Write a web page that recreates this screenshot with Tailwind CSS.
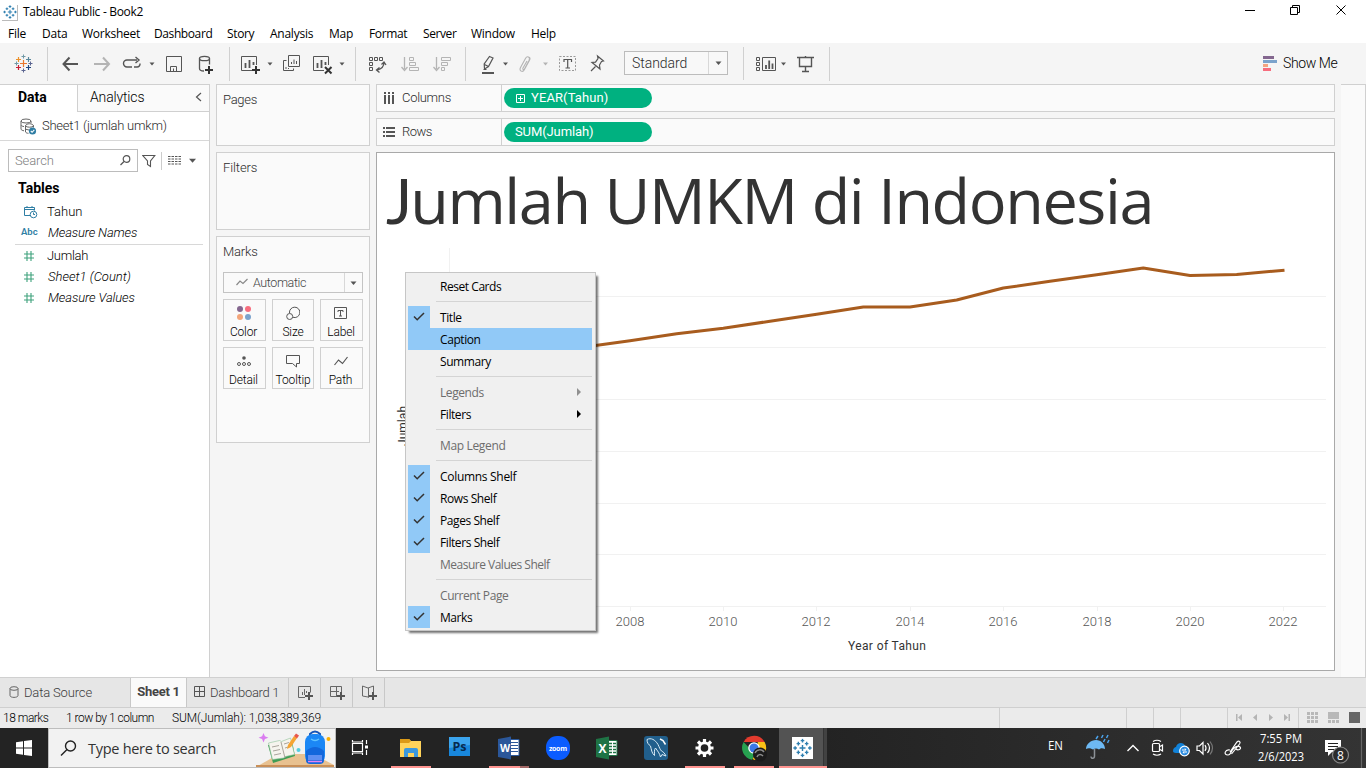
<!DOCTYPE html>
<html lang="en">
<head>
<meta charset="utf-8">
<title>Tableau Public - Book2</title>
<script src="https://cdn.jsdelivr.net/npm/@tailwindcss/browser@4"></script>
</head>
<body class="w-[1366px] h-[768px] overflow-hidden bg-white font-[Roboto,sans-serif] text-[13px] font-[350] text-[#2b2b2b]">
<svg width="0" height="0" class="hidden">
  <symbol id="caret" viewBox="0 0 6 4"><path d="M0 .5h6L3 4z" fill="#555"/></symbol>
  <symbol id="check" viewBox="0 0 12 9"><path d="M1 4.500 4.200 7.700 11 1" fill="none" stroke="#333" stroke-width="1.500"/></symbol>
  <symbol id="hash" viewBox="0 0 10 10"><path d="M3 0v10M7 0v10M0 3h10M0 7h10" fill="none" stroke="#3fa27c" stroke-width="1.100"/></symbol>
  <symbol id="blueLogo" viewBox="0 0 16 16"><path d="M8 5.500v5M5.500 8h5M4.500 2.800v3M3 4.300h3M11.500 2.800v3M10 4.300h3M4.500 10.200v3M3 11.700h3M11.500 10.200v3M10 11.700h3M8 .3v3M6.500 1.800h3M8 12.700v3M6.500 14.200h3M1.800 6.500v3M.3 8h3M14.200 6.500v3M12.700 8h3" fill="none" stroke="#2f7fb0" stroke-width="1.200"/></symbol>
</svg>

<div class="relative flex flex-col h-full">
  <!-- title bar -->
  <header class="flex h-6 shrink-0 items-center font-['Open_Sans',sans-serif] font-normal text-black">
    <div class="ml-[2px] mt-px flex size-4 items-center justify-center border-r border-b border-[#bbb]"><svg class="size-[14px]"><use href="#blueLogo"/></svg></div>
    <h1 class="ml-[5px] text-[12px] tracking-[-0.3px]">Tableau Public - Book2</h1>
    <svg class="ml-auto" width="120" height="24" viewBox="1240 0 120 24" fill="none" stroke="#000"><path d="M1245 10.500h10M1290.500 7.500h7v7h-7zM1292.500 7v-1.500h7v7h-2M1336.500 5.500l9 9M1345.500 5.500l-9 9"/></svg>
    <span class="w-[6px]"></span>
  </header>
  <!-- menu bar -->
  <nav class="flex h-[19px] shrink-0 items-center font-['Open_Sans',sans-serif] text-[12px] font-normal text-black tracking-[-0.25px]">
    <span class="ml-2 w-[34px]">File</span><span class="w-10">Data</span><span class="w-[72px]">Worksheet</span><span class="w-[73px] tracking-[-0.4px]">Dashboard</span><span class="w-[43px] tracking-[-0.35px]">Story</span><span class="w-[59px]">Analysis</span><span class="w-10">Map</span><span class="w-[54px] tracking-[-0.35px]">Format</span><span class="w-12 tracking-[-0.4px]">Server</span><span class="w-[60px]">Window</span><span>Help</span>
  </nav>

  <!-- toolbar -->
  <div class="flex h-[41px] shrink-0 bg-[#f5f5f5] text-[#555]">
    <div class="flex py-1">
      <svg class="border-r border-[#d0d0d0]" width="48" height="34" viewBox="0 47 47 34" fill="none" stroke-width="1.200">
        <path d="M23.500 60v7M20 63.500h7" stroke="#e8762c"/><path d="M18.500 57v5M16 59.500h5" stroke="#eb912c"/><path d="M28.500 57v5M26 59.500h5" stroke="#59879b"/><path d="M18.500 65v5M16 67.500h5" stroke="#c72035"/><path d="M28.500 65v5M26 67.500h5" stroke="#1f447e"/><path d="M23.500 54.500v4M21.500 56.500h4M14.500 63.500h4M16.500 61.500v4" stroke="#7199a6" stroke-width="1"/><path d="M23.500 68.500v4M21.500 70.500h4M28.500 63.500h4M30.500 61.500v4" stroke="#5b6591" stroke-width="1"/>
      </svg>
      <svg class="border-r border-[#d0d0d0]" width="182" height="34" viewBox="48 47 181 34" fill="none" stroke="#555" stroke-width="1.300">
        <path d="M69.500 57.500l-6 6.500 6 6.500M63 64h15" stroke-width="2"/>
        <path d="M103 57.500l6 6.500-6 6.500M109 64h-15" stroke="#b4b4b4" stroke-width="2"/>
        <path d="M132 67h-5a3.500 3.500 0 0 1 0-7h10M134 67h3a3 3 0 0 0 3-3.500M135.500 57l3.500 3-3.500 3" stroke-width="1.400"/>
        <path d="M149.500 62.500h5l-2.500 3z" fill="#555" stroke="none"/>
        <path d="M166.500 56.500h15v15h-15zM170.500 71v-4.500h6v4.500M173.500 71v-2.500" stroke-width="1"/>
        <path d="M199.500 58.500v10c0 1.500 2 2.500 4.500 2.500M209.500 58.500v6"/><ellipse cx="204.500" cy="58.500" rx="5" ry="2.200"/>
        <path d="M209 66v8M205 70h8" stroke="#333" stroke-width="2"/>
      </svg>
      <svg class="border-r border-[#d0d0d0]" width="126" height="34" viewBox="230 47 125 34" fill="none" stroke="#555" stroke-width="1">
        <path d="M252 70.500h-10.500v-14h15v8.500"/><path d="M245.500 68v-5M249.500 68v-8M253.500 65v-3" stroke-width="1.800"/>
        <path d="M256 66v8M252 70h8" stroke="#333" stroke-width="2"/>
        <path d="M267.500 62.500h5l-2.500 3z" fill="#555" stroke="none"/>
        <path d="M288.500 55.500h11v11h-11zM286.500 60.500h-3v10h10v-2M291.500 64v-2M294 64v-4.500M296.500 64v-3M286 69v-2M288.500 69v-1"/>
        <path d="M324 70.500h-10.500v-14h15v8.500"/><path d="M317.500 68v-5M321.500 68v-8M325.500 65v-3" stroke-width="1.800"/>
        <path d="M325 67l6.500 6.500M331.500 67l-6.500 6.500" stroke="#333" stroke-width="2"/>
        <path d="M339.500 62.500h5l-2.500 3z" fill="#555" stroke="none"/>
      </svg>
      <svg class="border-r border-[#d0d0d0]" width="110" height="34" viewBox="356 47 109 34" fill="none" stroke="#555" stroke-width="1">
        <path d="M369.500 57.500h3v3h-3zM374.500 57.500h3v3h-3zM379.500 57.500h3v3h-3zM369.500 62.500h3v3h-3zM369.500 67.500h3v3h-3z"/>
        <path d="M384 62.500c0 4-2.500 6.500-7 7.500M381.500 64.500l2.500-2.500 2 3M379.500 67.500l-3 2.500 3 2.500" stroke-width="1.300"/>
        <g stroke="#b4b4b4"><path d="M404.500 57v12M401.500 67l3 3.500 3-3.500" stroke-width="1.300"/><path d="M409.500 57.500h4v3h-4zM409.500 62.500h6v3h-6zM409.500 67.500h9v3h-9z"/>
        <path d="M436.500 57v12M433.500 67l3 3.500 3-3.500" stroke-width="1.300"/><path d="M441.500 57.500h9v3h-9zM441.500 62.500h6v3h-6zM441.500 67.500h3v3h-3z"/></g>
      </svg>
      <svg width="152" height="34" viewBox="466 47 152 34" fill="none" stroke="#555" stroke-width="1.200">
        <path d="M482 73h12" stroke-width="2"/><path d="M489.500 56.500l3.500 1.500-4.500 8.500-4 2.500-.300-5zM484.500 64.500l4 2M483.500 69.500h3"/>
        <path d="M503 62.500h5l-2.500 3z" fill="#555" stroke="none"/>
        <path d="M527 61l-4 7c-.8 1.500.8 2.300 1.600.8l4.500-8.500c1.500-3.500-2-4.800-3.500-2l-5.200 9.500c-1.600 3.200 2.300 5 3.900 2l5.200-9.500c.800-1.500.500-2.500-.3-3" stroke="#b4b4b4" stroke-width="1.100"/>
        <path d="M543 62.500h5l-2.500 3z" fill="#b4b4b4" stroke="none"/>
        <path d="M559.500 56.500h16v14h-16z" stroke="#999" stroke-width="1" stroke-dasharray="2 1.500"/><path d="M564 62v-2.500h7.500v2.500M567.700 60v8M565.500 68h4.500"/>
        <path d="M597.500 56l6 5-2 .5-2 3.500.5 4-8-6.500 3.500-.3 2.500-3.700zM595.500 66.500l-4.500 4.500"/>
      </svg>
      <div class="flex items-center border-r border-[#d0d0d0] w-[126px] pl-[6px]">
        <div class="flex h-6 w-[104px] items-center border border-[#bcbcbc] bg-[#f8f8f8] text-[14px] text-[#2b2b2b] -mt-px"><span class="grow pl-[7px] tracking-[-0.05px]">Standard</span><span class="flex h-full w-[19px] items-center justify-center border-l border-[#d8d8d8]"><svg class="h-1 w-[7px]"><use href="#caret"/></svg></span></div>
      </div>
      <svg class="border-r border-[#d0d0d0]" width="86" height="34" viewBox="744 47 85 34" fill="none" stroke="#555">
        <path d="M756.500 57.500h3v3h-3zM756.500 62.500h3v3h-3zM756.500 67.500h3v3h-3zM762.500 57.500h13v13h-13z"/><path d="M766 69v-4M769.200 69v-8.500M772.500 69v-5.500" stroke-width="1.800"/>
        <path d="M781 62.500h5l-2.500 3z" fill="#555" stroke="none"/>
        <path d="M797 57.500h17M799.500 58v8.500h12v-8.500M805.500 56v1M805.500 67v4M802 71.500h7" stroke-width="1.400"/>
      </svg>
    </div>
    <svg class="ml-auto mt-[13px]" width="14" height="16"><path d="M0 0h11v3H0z" fill="#84678f"/><path d="M0 4h14v3H0z" fill="#7ba3cc"/><path d="M0 8h5v3H0z" fill="#f3a481"/><path d="M0 12h8v3H0z" fill="#f76d7e"/></svg>
    <span class="ml-[6px] mr-[29px] mt-[10px] w-[54px] text-[14px] whitespace-nowrap text-black tracking-[-0.4px]">Show Me</span>
  </div>

  <!-- workspace -->
  <main class="flex h-[593px] shrink-0 bg-[#f5f5f5]">
    <aside class="flex w-[210px] flex-col border-r border-t border-[#d0d0d0] bg-white">
      <div class="flex h-[27px]">
        <div class="w-[77px] pl-[18px] pt-[2px] text-[14px] font-bold text-black tracking-[0px]">Data</div>
        <div class="flex flex-1 justify-between border-b border-l border-[#d0d0d0] bg-[#fafafa] pl-3 pt-[2px] text-[14px] text-black"><span class="tracking-[-0.15px]">Analytics</span><svg class="mr-[7px] mt-[5px]" width="7" height="10" fill="none" stroke="#555"><path d="M6 1 1.500 5 6 9" stroke-width="1.200"/></svg></div>
      </div>
      <div class="flex h-[29px] items-center border-b border-[#d8d8d8]">
        <svg class="ml-5" width="17" height="17" fill="none" stroke="#666"><ellipse cx="6" cy="3" rx="5" ry="2"/><path d="M1 3v8c0 1 1.500 1.500 3 1.800M4 8.500c-1.500 0-2.500-.7-3-1.300M11 3v2M5.500 8c0-3 8-3 8 0v1.500M5.500 8v6c.5.800 1.500 1.300 3 1.300M5.500 8c1 1.600 7 1.600 8 0M6 11.300l3 .7"/><circle cx="12.500" cy="13" r="3.600" fill="#2f7ea4" stroke="none"/><path d="M10.800 13l1.300 1.300 2.200-2.500" stroke="#fff" stroke-width="1.100"/></svg>
        <span class="ml-[5px] -mt-px tracking-[-0.25px]">Sheet1 (jumlah umkm)</span>
      </div>
      <div class="mt-2 flex h-[23px] items-center pl-2 text-[#555]">
        <div class="flex h-[23px] w-[130px] items-center justify-between border border-[#bcbcbc] pl-[6px] pr-[6px] text-[#808080]"><span class="tracking-[-0.1px]">Search</span><svg width="11" height="11" fill="none" stroke="#555" stroke-width="1.200"><circle cx="6.500" cy="4" r="3.300"/><path d="M4 6.500 0.500 10"/></svg></div>
        <svg class="ml-1" width="14" height="14" fill="none" stroke="#555"><path d="M.8 1.500h12L8.500 7v5.500l-3-2V7z" stroke-width="1.100"/></svg>
        <span class="ml-[5px] h-[18px] w-px bg-[#ccc]"></span>
        <svg class="ml-[6px]" width="13" height="11"><path d="M0 1.500h13M0 4h13M0 6.500h13M0 9h13" stroke="#555" stroke-dasharray="2.500 1"/></svg>
        <svg class="ml-2 h-[5px] w-[7px]"><use href="#caret"/></svg>
      </div>
      <h2 class="mt-[6px] pl-[18px] text-[14px] leading-5 font-bold text-black tracking-[0px]">Tables</h2>
      <div class="mt-[3px] flex flex-col text-black">
        <div class="flex h-[21px] items-center"><svg class="ml-6 mr-[9px]" width="14" height="14" fill="none" stroke="#2f7ea4"><path d="M6 10.500H.5v-8h10v3M.5 4.500h10M3 1v2M8 1v2"/><circle cx="9.500" cy="9.500" r="3.300"/><path d="M9.500 7.500v2h1.500"/></svg><span>Tahun</span></div>
        <div class="flex h-[21px] items-center"><span class="ml-[21px] w-[27px] text-[9.500px] font-semibold text-[#2f7ea4]">Abc</span><i class="tracking-[-0.15px]">Measure Names</i></div>
        <div class="ml-[15px] mr-[6px] h-[2px] border-b border-[#d8d8d8]"></div>
        <div class="flex h-[21px] items-center"><svg class="ml-6 mr-[13px] size-[10px]"><use href="#hash"/></svg><span class="tracking-[-0.3px]">Jumlah</span></div>
        <div class="flex h-[21px] items-center"><svg class="ml-6 mr-[14px] size-[10px]"><use href="#hash"/></svg><i>Sheet1 (Count)</i></div>
        <div class="flex h-[21px] items-center"><svg class="ml-6 mr-[14px] size-[10px]"><use href="#hash"/></svg><i class="tracking-[-0.1px]">Measure Values</i></div>
      </div>
    </aside>

    <section class="ml-[6px] flex w-[154px] flex-col gap-[6px]">
      <div class="h-[62px] border border-[#d0d0d0] bg-[#fafafa] pl-[6px] pt-[5px] tracking-[-0.3px]">Pages</div>
      <div class="h-[78px] border border-[#d0d0d0] bg-[#fafafa] pl-[6px] pt-[5px] tracking-[-0.1px]">Filters</div>
      <div class="h-[207px] border border-[#d0d0d0] bg-[#fafafa] px-[6px] pt-[5px]">
        <div class="h-5 tracking-[-0.2px]">Marks</div>
        <div class="mt-[10px] flex h-[21px] w-[140px] items-center border border-[#c4c4c4]"><svg class="ml-3 -mt-[2px]" width="12" height="8" fill="none" stroke="#888" stroke-width="1.200"><path d="M.5 7 4 3l3 2.500L11.500 1"/></svg><span class="ml-[5px] grow pt-px text-[12.500px] tracking-[-0.4px] text-[#444]">Automatic</span><span class="flex h-full w-[18px] items-center justify-center border-l border-[#d8d8d8]"><svg class="h-1 w-[7px]"><use href="#caret"/></svg></span></div>
        <div class="mt-[6px] grid grid-cols-[43px_42px_43px] gap-[6px] text-center text-[12px] tracking-[-0.15px] text-black">
          <div class="flex h-[42px] flex-col items-center border border-[#d0d0d0] pt-[6px] pr-[2px]"><svg width="14" height="14"><circle cx="3" cy="3" r="3" fill="#84678f"/><circle cx="11" cy="3" r="3" fill="#f76d7e"/><circle cx="3" cy="11" r="3" fill="#f3a57a"/><circle cx="11" cy="11" r="3" fill="#7ba3cc"/></svg><span class="mt-1 leading-4">Color</span></div>
          <div class="flex h-[42px] flex-col items-center border border-[#d0d0d0] pt-[6px]"><svg width="14" height="14" fill="none" stroke="#555"><path d="M3.500 7a5.200 5.200 0 1 1 3.500 4.300"/><circle cx="3.700" cy="10.500" r="3"/></svg><span class="mt-1 leading-4">Size</span></div>
          <div class="flex h-[42px] flex-col items-center border border-[#d0d0d0] pt-[6px] pr-px"><svg width="14" height="14" fill="none" stroke="#555"><path d="M.5 1.500h12v11H.5zM4 6V4.500h5V6M6.500 4.500v5.500M5 10h3"/></svg><span class="mt-1 leading-4">Label</span></div>
          <div class="flex h-[42px] flex-col items-center border border-[#d0d0d0] pt-[6px] pr-[2px]"><svg width="14" height="14" fill="none" stroke="#555"><circle cx="7" cy="4" r="1.800" fill="#555" stroke="none"/><circle cx="2" cy="10" r="1.500"/><circle cx="7" cy="10" r="1.500"/><circle cx="12" cy="10" r="1.500"/></svg><span class="mt-1 leading-4">Detail</span></div>
          <div class="flex h-[42px] flex-col items-center border border-[#d0d0d0] pt-[6px]"><svg width="14" height="14" fill="none" stroke="#555"><path d="M.5 1.500h13v8h-3v3.500l-4-3.500h-6z"/></svg><span class="mt-1 leading-4">Tooltip</span></div>
          <div class="flex h-[42px] flex-col items-center border border-[#d0d0d0] pt-[6px] pr-[2px]"><svg width="14" height="14" fill="none" stroke="#555" stroke-width="1.200"><path d="M.5 11 4.500 6l4 3.500L13.500 3"/></svg><span class="mt-1 leading-4">Path</span></div>
        </div>
      </div>
    </section>

    <section class="ml-[6px] flex w-[959px] flex-col gap-[6px]">
      <div class="flex h-7 items-center border border-[#d0d0d0] bg-[#fafafa]">
        <div class="flex h-full w-[125px] items-center border-r border-[#d0d0d0] pl-[7px]"><svg width="11" height="12" fill="#555"><path d="M0 0h2v2H0zM0 3h2v9H0zM4 0h2v2H4zM4 3h2v9H4zM8 0h2v2H8zM8 3h2v9H8z"/></svg><span class="ml-[7px] tracking-[-0.3px]">Columns</span></div>
        <div class="ml-[2px] flex h-5 w-[148px] items-center rounded-full bg-[#00b180] pl-3 font-normal text-white"><svg width="9" height="9" fill="none" stroke="#fff"><path d="M.5.500h8v8h-8zM4.500 2v5M2 4.500h5"/></svg><span class="ml-[6px] tracking-[0.1px]">YEAR(Tahun)</span></div>
      </div>
      <div class="flex h-7 items-center border border-[#d0d0d0] bg-[#fafafa]">
        <div class="flex h-full w-[125px] items-center border-r border-[#d0d0d0] pl-[6px]"><svg width="12" height="10" fill="#555"><path d="M0 0h2v2H0zM3 0h9v2H3zM0 4h2v2H0zM3 4h9v2H3zM0 8h2v2H0zM3 8h9v2H3z"/></svg><span class="ml-[7px] tracking-[-0.5px]">Rows</span></div>
        <div class="ml-[2px] flex h-5 w-[148px] items-center rounded-full bg-[#00b180] pl-[11px] font-normal text-white"><span class="tracking-[-0.1px]">SUM(Jumlah)</span></div>
      </div>
      <div class="relative flex h-[519px] flex-col border border-[#a9a9a9] bg-white">
        <h2 class="h-[94px] pl-[9px] font-['Open_Sans',sans-serif] text-[63px] leading-[94px] font-normal whitespace-nowrap text-[#333] tracking-[-1.42px]"><span class="font-[Lato,sans-serif] text-[62px] tracking-[-2px]">J</span>umlah UMKM di Indonesia</h2>
        <svg width="957" height="423" viewBox="377 247 957 423" font-family="Roboto, sans-serif" font-size="13">
          <path d="M449.500 248v358M450 296.500h876M450 347.500h876M450 399.500h876M450 451.500h876M450 503.500h876M450 554.500h876M450 606.500h876M630.500 607v4M723.500 607v4M816.500 607v4M910.500 607v4M1003.500 607v4M1097.500 607v4M1190.500 607v4M1283.500 607v4" stroke="#f1f1f1" fill="none"/>
          <path d="M580 347.500 595.500 345.500 630 340.800 676.700 333.800 723.300 328.300 770 321.200 816.700 314.200 863.300 307H910L956.700 300 1003.300 288 1050 281.300 1096.700 274.700 1143.300 268 1190 275.500 1236.700 274.500 1284.500 270.200" fill="none" stroke="#a85c1e" stroke-width="3" stroke-linejoin="round"/>
          <g fill="#555" text-anchor="middle"><text x="630" y="626">2008</text><text x="723" y="626">2010</text><text x="816" y="626">2012</text><text x="910" y="626">2014</text><text x="1003" y="626">2016</text><text x="1097" y="626">2018</text><text x="1190" y="626">2020</text><text x="1283" y="626">2022</text></g>
          <text x="848" y="650" textLength="78" fill="#333" font-size="12" font-weight="400">Year of Tahun</text>
          <text transform="translate(407 446) rotate(-90)" textLength="40" fill="#333" font-size="12" font-weight="400">Jumlah</text>
        </svg>
      </div>
    </section>
    <div class="ml-[6px] w-[25px] border-t border-r border-[#d0d0d0] bg-[#fafafa]"></div>
  </main>

  <!-- sheet tabs -->
  <div class="flex h-[30px] shrink-0 items-stretch border-t border-[#d0d0d0] bg-[#e6e6e6] text-[#3c3c3c]">
    <div class="flex w-[131px] items-center border-r border-[#c8c8c8] pl-[9px]"><svg class="mb-[2px]" width="10" height="12" fill="none" stroke="#666"><ellipse cx="5" cy="2.500" rx="4" ry="1.800"/><path d="M1 2.500v7c0 2.500 8 2.500 8 0v-7"/></svg><span class="ml-[5px] tracking-[-0.15px]">Data Source</span></div>
    <div class="w-[56px] border-r border-[#c8c8c8] bg-[#fafafa] pt-[4px] text-center font-bold text-[#444] tracking-[-0.3px]">Sheet 1</div>
    <div class="flex w-[102px] items-center border-r border-[#c8c8c8] pl-[7px]"><svg class="mb-[3px]" width="11" height="11" fill="none" stroke="#555"><path d="M.5.500h10v10H.500zM5.500 0v11M0 5.500h11"/></svg><span class="ml-[5px] whitespace-nowrap tracking-[-0.3px]">Dashboard 1</span></div>
    <svg class="border-r border-[#c8c8c8]" width="32" height="29" viewBox="289 678 31 29" fill="none" stroke="#666"><path d="M305 697.500h-6.500v-11h12v6M302.500 695v-3M304.500 695v-6M306.500 693v-2"/><path d="M309 692v8M305 696h8" stroke="#555" stroke-width="2"/></svg>
    <svg class="border-r border-[#c8c8c8]" width="32" height="29" viewBox="321 678 31 29" fill="none" stroke="#666"><path d="M337 696.500h-6.500v-10h11v6M336.500 686v11M330 691.500h9"/><path d="M341 692v8M337 696h8" stroke="#555" stroke-width="2"/></svg>
    <svg class="border-r border-[#c8c8c8]" width="32" height="29" viewBox="353 678 31 29" fill="none" stroke="#666"><path d="M369 697.500l-1-.5-5.500-1v-10l5.500 2 5.500-2v6M368.500 688v9"/><path d="M373 692v8M369 696h8" stroke="#555" stroke-width="2"/></svg>
  </div>
  <!-- status bar -->
  <div class="flex h-[21px] shrink-0 items-stretch border-t border-[#cfcfcf] bg-[#ebebeb] text-[12px] leading-5 whitespace-nowrap text-black">
    <span class="ml-[3px] w-[63px] tracking-[-0.5px]">18 marks</span><span class="w-[106px] tracking-[-0.5px]">1 row by 1 column</span><span class="tracking-[-0.1px]">SUM(Jumlah): 1,038,389,369</span>
    <svg class="ml-auto" width="367" height="20" viewBox="999 708 367 20"><path d="M1126.500 708v20M1153.500 708v20M1180.500 708v20M1227.500 708v20M1298.500 708v20M999.500 708v20" stroke="#cfcfcf"/><path d="M1236 714h1.500v7h-1.500zM1242 714v7l-4-3.500zM1257 714v7l-4-3.500zM1269 714v7l4-3.500zM1284 714v7l4-3.500zM1288.500 714h1.500v7h-1.500z" fill="#b4b4b4"/><path d="M1307 712h3v3h-3zM1311 712h3v3h-3zM1315 712h3v3h-3zM1307 716h3v3h-3zM1311 716h3v3h-3zM1315 716h3v3h-3zM1307 720h3v3h-3zM1311 720h3v3h-3zM1315 720h3v3h-3zM1328 712h11v7h-11zM1328 720h3v3h-3zM1332 720h3v3h-3zM1336 720h3v3h-3z" fill="#b8b8b8"/><path d="M1349 712h11v11h-11z" fill="#666"/></svg>
  </div>

  <!-- taskbar -->
  <footer class="flex h-10 shrink-0 bg-[linear-gradient(90deg,#232323_60%,#343434)] font-['Open_Sans',sans-serif] font-normal text-white">
    <svg width="48" height="40" viewBox="0 728 48 40" fill="#fff"><path d="M16 742.200 23 741.200V747.500H16zM24 741 32 740v7.500H24zM16 748.500h7v6.300L16 753.800zM24 748.500h8v7.500L24 755z"/></svg>
    <div class="flex w-72 items-center border border-[#bdbdbd] bg-[#f2f2f2]">
      <svg class="ml-[11px]" width="17" height="17" fill="none" stroke="#222" stroke-width="1.400"><circle cx="10.500" cy="6" r="5"/><path d="M7 9.500 1 15.500"/></svg>
      <span class="ml-[11px] pt-px text-[14.500px] text-[#333] tracking-[-0.28px] whitespace-nowrap">Type here to search</span>
      <svg class="ml-auto" width="80" height="38" viewBox="256 729 80 38">
        <path d="M257 767l23-13h34l21 11v2z" fill="#e8c190"/><path d="M257 765h78v2h-78z" fill="#c98f57"/>
        <path d="M264.500 733l1.400 3.300 3.500 1.400-3.500 1.400-1.400 3.500-1.400-3.500-3.500-1.400 3.500-1.400z" fill="#da7cf0"/>
        <path d="M269 745l24-4 3 15-22 7z" fill="#3f9d54"/><path d="M269.500 743l11-2.500 2 1 9-3.500 4 16.500-9 2-2 1.500-11 1.500z" fill="#f6f4ee" stroke="#8fc39a" stroke-width=".6"/><path d="M282 742l4 16M273 747l7-1.500M274 751l7-1.500M275 755l7-1.500M285 744l5-1.500M286 748l5-1.500" stroke="#aaa59c" fill="none"/>
        <path d="M288 749l1-4 6-9 3 2-6 9z" fill="#f5a434"/><path d="M295 736l2-2.500 3 2-2 3z" fill="#e9574b"/>
        <circle cx="299.500" cy="750" r="2" fill="#53cfe0"/><circle cx="329.500" cy="739" r="2" fill="#f9b000"/>
        <path d="M311 737v-3q5-5 10 0v3" fill="none" stroke="#1655b8" stroke-width="2"/><rect x="306" y="734" width="20" height="30" rx="8" fill="#1b87f5"/><path d="M307 751q9-8 18 0v9q0 4-4 4h-10q-4 0-4-4z" fill="#1267dc"/><path d="M309 755h14v5h-14z" fill="#5d8ff2"/><path d="M309 761.500h14" stroke="#e484f2" stroke-width="1.500"/><path d="M312 739q4 3 8 0" fill="none" stroke="#5fc3ff" stroke-width="1.500"/>
      </svg>
    </div>
    <svg width="500" height="40" viewBox="336 728 500 40">
      <path d="M779 728h44v40h-44z" fill="#535353"/><path d="M823 728h1v40h-1z" fill="#343434"/><path d="M824 728h3v40h-3z" fill="#424242"/>
      <path d="M391 766h40v2h-40zM489 766h31v2h-31zM685 766h40v2h-40zM734 766h40v2h-40zM779 766h48v2h-48z" fill="#ff9490"/><path d="M520 766h9v2h-9z" fill="#a36866"/>
      <path d="M352.500 743.500h10v8h-10zM352.500 740v2h10v-2M352.500 755v-2h10v2M366.500 740v4M366.500 750v5" fill="none" stroke="#fff" stroke-width="1.200"/><path d="M365 745.500h3v3h-3z" fill="#fff"/>
      <path d="M400 739h9l2 2h10v16h-21z" fill="#ffd35a"/><path d="M400 739h9l2 2-2 2h-9z" fill="#dc9a17"/><path d="M404 750q0-2 2-2h10q2 0 2 2v7h-4v-4h-6v4h-4z" fill="#3b98dd"/>
      <path d="M449 737h21v19h-21z" fill="#1887dc"/><path d="M449 737h21v8l-21 3z" fill="#3ba4ed"/>
      <text x="452.500" y="751" font-size="12.500" font-weight="700" fill="#062a4f">Ps</text>
      <path d="M509 739.500h10v16h-10z" fill="#fff" stroke="#2b579a"/><path d="M511 742.500h7M511 745.500h7M511 748.500h7M511 751.500h7" stroke="#2b579a" stroke-width="1.200"/><path d="M498 739l13-2.500v23l-13-2.500z" fill="#2b579a"/><text x="500" y="752" font-size="10.500" font-weight="700" fill="#fff">W</text>
      <rect x="546" y="736" width="24" height="24" rx="11" fill="#0b5cff"/><text x="549" y="750.500" font-size="7" font-weight="700" textLength="18" fill="#fff">zoom</text>
      <path d="M607 740.500h10v15h-10z" fill="#fff" stroke="#1f7345"/><path d="M609 743.500h7M609 746.500h7M609 749.500h7M609 752.500h7" stroke="#1f7345" stroke-width="1.500" stroke-dasharray="3 1"/><path d="M596 739l13-2.500v23l-13-2.500z" fill="#1f7345"/><text x="598.500" y="753" font-size="12" font-weight="700" fill="#fff">X</text>
      <rect x="644" y="736" width="24" height="24" rx="3" fill="#215f8c"/><path d="M647 739.500c4-2 8 0 11 5 1.500 3 2 5 3.500 6.500 2 1 3 2 4.500 5l-4-1.500-1.500 2.500c-1-4-3-6-5-9-1.500 2-1 4-1 7.500-3-2.500-3-6-4-9.500-2-1.500-3.500-3-3.500-6.500z" fill="none" stroke="#d8eaf5" stroke-width="1"/><path d="M660 739l3 1.500 2.500 4" stroke="#fff" stroke-width="1.500" fill="none"/>
      <circle cx="704.500" cy="748" r="5.200" fill="none" stroke="#fff" stroke-width="2.800"/><path d="M704.500 739v3.500M704.500 753.500v3.500M695.500 748h3.500M710 748h3.500M698 741.500l2.500 2.500M708.500 752l2.500 2.500M711 741.500l-2.500 2.500M700.500 752l-2.500 2.500" stroke="#fff" stroke-width="3.200"/>
      <path d="M743.600 742a12 12 0 0 1 21 0H754z" fill="#e33b2e"/><path d="M743.600 742a12 12 0 0 0 8.400 17.800l5-9-8-3z" fill="#27a150"/><path d="M764.600 742a12 12 0 0 1-10 18l-2-1 6-10-1-7z" fill="#fbc116"/><circle cx="754" cy="748" r="5.800" fill="#fff"/><circle cx="754" cy="748" r="4.500" fill="#3b78e7"/><circle cx="760" cy="754.500" r="7" fill="#1b1b1b"/><path d="M755 753c2-4 7-4 9-1M757 757c1-3 4-3 6-1" stroke="#8c8c8c" stroke-width="1.500" fill="none"/>
      <path d="M792 737h21v22h-21z" fill="#fff"/><use href="#blueLogo" x="793" y="738.500" width="19" height="19"/>
    </svg>
    <svg class="ml-auto" width="330" height="40" viewBox="1036 728 330 40" fill="none" stroke="#fff" stroke-width="1.200">
      <text x="1048" y="750" font-size="12" textLength="15" lengthAdjust="spacingAndGlyphs" fill="#fff" stroke="none">EN</text>
      <path d="M1086 749c0-5 5-9 10-9s9 4 9 9c-3-1-4-1-6 .500-2-1.500-4-1.500-6 0-3-1.500-5-1.500-7-.5z" fill="#6db9f4" stroke="none"/><path d="M1094.500 749v7c0 3-3.500 3-3.500 .5" stroke="#8c9196" stroke-width="1.500"/><path d="M1098 736l-2 3M1103 735l-1.500 3M1108 735l-1.500 3M1105 739l-1.500 3M1109 740l-1.500 3" stroke="#4ba3ec" stroke-width="1.500"/>
      <path d="M1127.500 751l5.500-5.500 5.500 5.500" stroke-width="1.400"/>
      <rect x="1152.500" y="743.500" width="7" height="8" rx="1"/><path d="M1160 746.500l2.500-1.500v6l-2.500-1.500M1153 741.500q4-2.500 8 0M1153 754q4 2.500 8 0"/>
      <path d="M1173 751c0-3 2-4 3-4 1-5 8-5 9-1 3 0 4 6 1 7h-10c-2 0-3-1-3-2z" fill="#1282d8" stroke="none"/><circle cx="1184.500" cy="751" r="4.800" fill="#2a8be0" stroke="#fff"/><path d="M1182 750h4l-1-1.500M1187 752h-4l1 1.500" stroke-width="1"/>
      <path d="M1197 746v4.500h2.500l3.500 3.500v-11.500l-3.500 3.500zM1205 745q2 3 0 6M1207.500 743q4 5 0 10"/><path d="M1210 741.500q5 6.500 0 13" stroke="#777"/>
      <path d="M1230 752l7-10c2-2 4 0 2.500 2l-8 10M1230 750c-5-1-7 5-2 5 3 0 3-4 5-6s5-4 7-2-2 4-4 2"/>
      <path d="M1325 740h16v12h-9l-4 4v-4h-3z" fill="#fff" stroke="none"/><path d="M1328 743.500h10M1328 746.500h10M1328 749.500h6" stroke="#222"/><circle cx="1340.500" cy="755" r="8" fill="#2b2b2b" stroke="#888"/><text x="1337" y="759.500" font-size="12" fill="#fff" stroke="none">8</text>
      <g fill="#fff" stroke="none" font-size="12"><text x="1260" y="743" textLength="42" lengthAdjust="spacingAndGlyphs">7:55 PM</text><text x="1258" y="761" textLength="46" lengthAdjust="spacingAndGlyphs">2/6/2023</text></g>
      <path d="M1361.500 728v40" stroke="#666"/>
    </svg>
  </footer>

  <!-- cards context menu -->
  <div class="absolute top-[272px] left-[405px] flex h-[359px] w-[191px] flex-col border border-[#c6c6c6] bg-[#f0f0f0] py-[2px] pr-[3px] pl-[2px] font-['Open_Sans',sans-serif] text-[12px] leading-[20px] font-normal text-black tracking-[-0.42px] shadow-[3px_3px_2px_-1px_rgba(0,0,0,0.55)] *:shrink-0">
    <div class="h-[22px] pt-[2px] pl-8 tracking-[-0.45px]">Reset Cards</div>
    <div class="ml-7 h-[9px] pt-1"><div class="h-px bg-[#d4d4d4]"></div></div>
    <div class="flex h-[22px]"><span class="flex w-[22px] justify-center bg-[#91c9f7] pt-[6px]"><svg class="h-[9px] w-3"><use href="#check"/></svg></span><span class="ml-[10px] pt-[2px]">Title</span></div>
    <div class="h-[22px] bg-[#91c9f7] pt-[2px] pl-8">Caption</div>
    <div class="h-[22px] pt-[2px] pl-8">Summary</div>
    <div class="ml-7 h-[9px] pt-1"><div class="h-px bg-[#d4d4d4]"></div></div>
    <div class="flex h-[22px] justify-between pt-[2px] pr-[11px] pl-8 text-[#6d6d6d]">Legends<svg class="mt-[5px]" width="4" height="8" fill="#909090"><path d="M0 0l4 4-4 4z"/></svg></div>
    <div class="flex h-[22px] justify-between pt-[2px] pr-[11px] pl-8">Filters<svg class="mt-[5px]" width="4" height="8"><path d="M0 0l4 4-4 4z"/></svg></div>
    <div class="ml-7 h-[9px] pt-1"><div class="h-px bg-[#d4d4d4]"></div></div>
    <div class="h-[22px] pt-[2px] pl-8 text-[#6d6d6d] tracking-[-0.35px]">Map Legend</div>
    <div class="ml-7 h-[9px] pt-1"><div class="h-px bg-[#d4d4d4]"></div></div>
    <div class="flex h-[22px]"><span class="flex w-[22px] justify-center bg-[#91c9f7] pt-[6px]"><svg class="h-[9px] w-3"><use href="#check"/></svg></span><span class="ml-[10px] pt-[2px] tracking-[-0.3px]">Columns Shelf</span></div>
    <div class="flex h-[22px]"><span class="flex w-[22px] justify-center bg-[#91c9f7] pt-[6px]"><svg class="h-[9px] w-3"><use href="#check"/></svg></span><span class="ml-[10px] pt-[2px]">Rows Shelf</span></div>
    <div class="flex h-[22px]"><span class="flex w-[22px] justify-center bg-[#91c9f7] pt-[6px]"><svg class="h-[9px] w-3"><use href="#check"/></svg></span><span class="ml-[10px] pt-[2px]">Pages Shelf</span></div>
    <div class="flex h-[22px]"><span class="flex w-[22px] justify-center bg-[#91c9f7] pt-[6px]"><svg class="h-[9px] w-3"><use href="#check"/></svg></span><span class="ml-[10px] pt-[2px]">Filters Shelf</span></div>
    <div class="h-[22px] pt-[2px] pl-8 text-[#6d6d6d] tracking-[-0.5px]">Measure Values Shelf</div>
    <div class="ml-7 h-[9px] pt-1"><div class="h-px bg-[#d4d4d4]"></div></div>
    <div class="h-[22px] pt-[2px] pl-8 text-[#6d6d6d]">Current Page</div>
    <div class="flex h-[22px]"><span class="flex w-[22px] justify-center bg-[#91c9f7] pt-[6px]"><svg class="h-[9px] w-3"><use href="#check"/></svg></span><span class="ml-[10px] pt-[2px]">Marks</span></div>
  </div>
</div>
</body>
</html>
